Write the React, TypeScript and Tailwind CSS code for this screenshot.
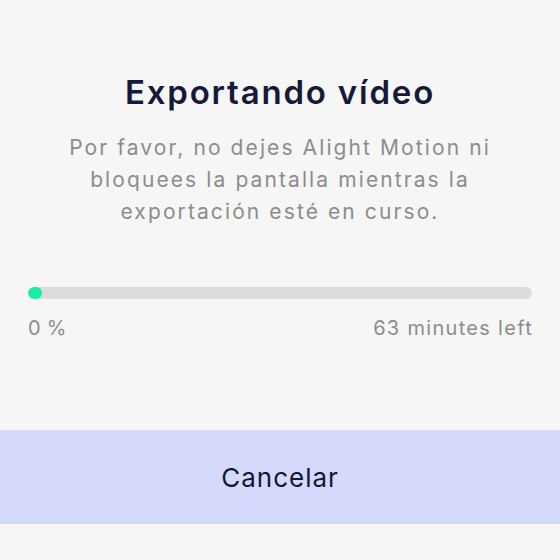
export default function App() {
  const progress = 0

  return (
    <div className="h-[560px] w-full bg-[#f6f6f6] flex flex-col font-['Inter',sans-serif]">
      {/* Header */}
      <div className="pt-[72px] px-4 flex flex-col items-center text-center">
        <h1 className="text-[33px] leading-[40px] font-semibold text-[#171938] tracking-[1.8px]">
          Exportando vídeo
        </h1>
        <p className="mt-5 text-[21px] leading-[32px] text-[#8c8c8c] tracking-[2.1px]">
          Por favor, no dejes Alight Motion ni
          <br />
          bloquees la pantalla mientras la
          <br />
          exportación esté en curso.
        </p>
      </div>

      {/* Progress */}
      <div className="mt-[59px] px-7">
        <div className="h-3 w-full rounded-full bg-[#dcdcdc] overflow-hidden">
          <div
            className="h-full rounded-full bg-[#17eea0] min-w-[14px]"
            style={{ width: `${progress}%` }}
          />
        </div>
        <div className="mt-[17px] flex justify-between text-[20px] leading-6 text-[#8c8c8c] tracking-[1.3px]">
          <span>0&thinsp;%</span>
          <span className="-mr-[1px]">63 minutes left</span>
        </div>
      </div>

      {/* Cancel */}
      <button className="mt-[90px] h-[94px] w-full bg-[#d5dafd] text-[26px] text-[#141733] tracking-[1px]">
        Cancelar
      </button>
    </div>
  )
}
